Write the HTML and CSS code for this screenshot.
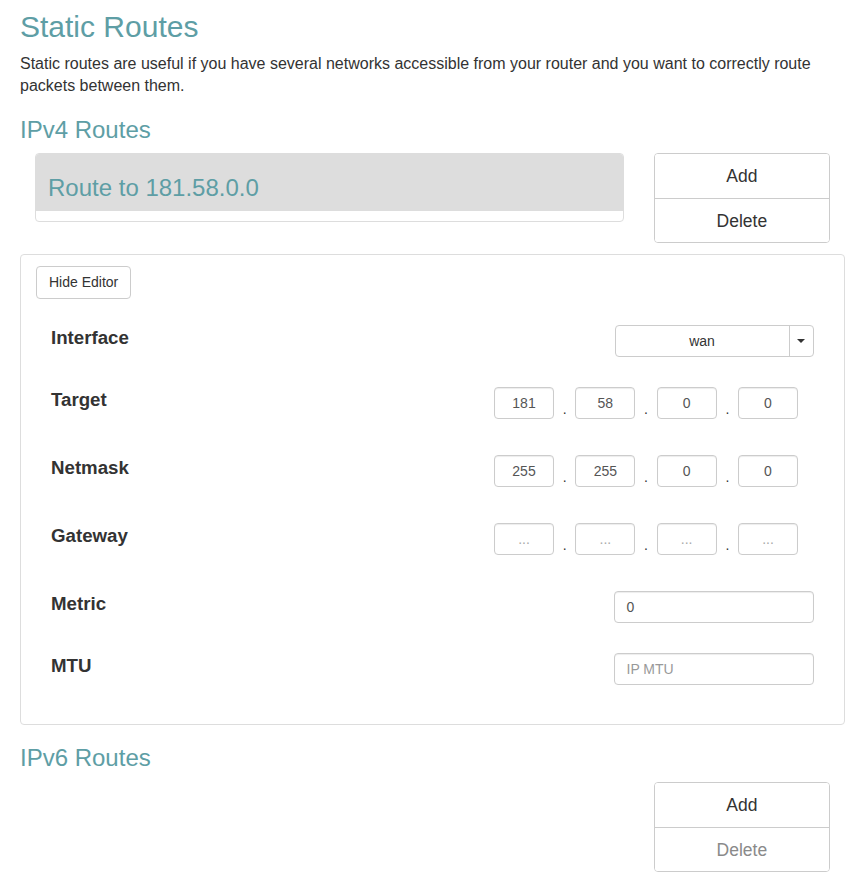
FILE: index.html
```html
<!DOCTYPE html>
<html lang="en">
<head>
<meta charset="utf-8">
<title>Static Routes</title>
<link rel="stylesheet" href="styles.css">
</head>
<body>
<div class="page">
  <h1 class="title">Static Routes</h1>
  <p class="intro">Static routes are useful if you have several networks accessible from your router and you want to correctly route packets between them.</p>

  <h3 class="section">IPv4 Routes</h3>
  <div class="row">
    <div class="col-main">
      <div class="route-list">
        <div class="route-item">Route to 181.58.0.0</div>
        <div class="route-foot"></div>
      </div>
    </div>
    <div class="col-side">
      <div class="btn-stack">
        <button class="stack-btn">Add</button>
        <button class="stack-btn">Delete</button>
      </div>
    </div>
  </div>

  <div class="editor">
    <button class="btn-small">Hide Editor</button>
    <div class="fields">
      <div class="field-row">
        <div class="label">Interface</div>
        <div class="select">
          <span class="select-value">wan</span>
          <span class="select-caret"><span class="caret"></span></span>
        </div>
      </div>
      <div class="field-row">
        <div class="label">Target</div>
        <div class="ip-group">
          <span class="ip-box">181</span><span class="ip-sep">.</span>
          <span class="ip-box">58</span><span class="ip-sep">.</span>
          <span class="ip-box">0</span><span class="ip-sep">.</span>
          <span class="ip-box">0</span>
        </div>
      </div>
      <div class="field-row">
        <div class="label">Netmask</div>
        <div class="ip-group">
          <span class="ip-box">255</span><span class="ip-sep">.</span>
          <span class="ip-box">255</span><span class="ip-sep">.</span>
          <span class="ip-box">0</span><span class="ip-sep">.</span>
          <span class="ip-box">0</span>
        </div>
      </div>
      <div class="field-row">
        <div class="label">Gateway</div>
        <div class="ip-group">
          <span class="ip-box placeholder">...</span><span class="ip-sep">.</span>
          <span class="ip-box placeholder">...</span><span class="ip-sep">.</span>
          <span class="ip-box placeholder">...</span><span class="ip-sep">.</span>
          <span class="ip-box placeholder">...</span>
        </div>
      </div>
      <div class="field-row">
        <div class="label">Metric</div>
        <div class="text-input">0</div>
      </div>
      <div class="field-row">
        <div class="label">MTU</div>
        <div class="text-input placeholder">IP MTU</div>
      </div>
    </div>
  </div>

  <h3 class="section">IPv6 Routes</h3>
  <div class="row">
    <div class="col-main"></div>
    <div class="col-side">
      <div class="btn-stack">
        <button class="stack-btn">Add</button>
        <button class="stack-btn disabled">Delete</button>
      </div>
    </div>
  </div>
</div>
</body>
</html>
```

FILE: styles.css
```css
* {
  box-sizing: border-box;
}

body {
  margin: 0;
  background: #fff;
  color: #333;
  font-family: "Liberation Sans", Arial, sans-serif;
}

.page {
  padding: 0 18px 0 20px;
}

.title {
  margin: 10px 0 0;
  font-size: 30px;
  line-height: 33px;
  font-weight: normal;
  color: #5e9ea5;
}

.intro {
  margin: 9.5px 0 0;
  font-size: 16px;
  line-height: 22px;
}

.section {
  margin: 20px 0 10.5px;
  font-size: 24px;
  line-height: 26.4px;
  font-weight: normal;
  color: #5e9ea5;
}

.row {
  display: flex;
}

.col-main {
  flex: 0 0 75%;
  padding: 0 15px;
}

.col-side {
  flex: 0 0 25%;
  padding: 0 15px;
}

.route-list {
  border: 1px solid #ddd;
  border-radius: 4px;
  overflow: hidden;
}

.route-item {
  background: #ddd;
  color: #5e9ea5;
  font-size: 24px;
  line-height: 26px;
  padding: 21px 12px 10px;
}

.route-foot {
  height: 10px;
}

.btn-stack {
  display: flex;
  flex-direction: column;
  border: 1px solid #ccc;
  border-radius: 4px;
  overflow: hidden;
}

.stack-btn {
  height: 44px;
  border: 0;
  background: #fff;
  color: #333;
  font-family: inherit;
  font-size: 17.5px;
  padding: 0;
}

.stack-btn + .stack-btn {
  height: 44px;
  border-top: 1px solid #ccc;
  padding-top: 1px;
}

.stack-btn.disabled {
  color: #8a8a8a;
}

.editor {
  margin-top: 11px;
  border: 1px solid #ddd;
  border-radius: 4px;
  padding: 11px 30.5px 39px 15px;
}

.btn-small {
  display: block;
  border: 1px solid #ccc;
  border-radius: 4px;
  background: #fff;
  color: #333;
  font-family: inherit;
  font-size: 14px;
  line-height: 19px;
  padding: 6px 12px;
}

.fields {
  margin-top: 26px;
  padding-left: 15px;
}

.field-row {
  display: flex;
  justify-content: space-between;
  align-items: flex-start;
}

.field-row + .field-row {
  margin-top: 30px;
}

.label {
  font-weight: bold;
  font-size: 18.7px;
  line-height: 22px;
  padding-top: 2px;
}

.select {
  display: flex;
  width: 199px;
  height: 32px;
  border: 1px solid #ccc;
  border-radius: 4px;
  background: #fff;
  font-size: 14px;
  color: #333;
}

.select-value {
  flex: 1;
  text-align: center;
  line-height: 30px;
}

.select-caret {
  width: 24px;
  border-left: 1px solid #ccc;
  display: flex;
  align-items: center;
  justify-content: center;
}

.caret {
  width: 0;
  height: 0;
  border-left: 4px solid transparent;
  border-right: 4px solid transparent;
  border-top: 4px solid #333;
}

.ip-group {
  display: flex;
  height: 38px;
  margin-right: 15.5px;
  padding-bottom: 6px;
}

.ip-box {
  display: block;
  width: 60px;
  height: 32px;
  border: 1px solid #ccc;
  border-radius: 4px;
  box-shadow: inset 0 1px 1px rgba(0, 0, 0, 0.075);
  text-align: center;
  font-size: 14px;
  line-height: 30px;
  color: #555;
}

.ip-sep {
  display: block;
  width: 21.33px;
  height: 32px;
  text-align: center;
  font-size: 14px;
  line-height: 19px;
  padding-top: 13px;
  color: #333;
}

.placeholder {
  color: #999;
}

.ip-box.placeholder {
  color: #aaa;
}

.text-input {
  width: 200px;
  height: 32px;
  border: 1px solid #ccc;
  border-radius: 4px;
  box-shadow: inset 0 1px 1px rgba(0, 0, 0, 0.075);
  padding: 0 12px;
  font-size: 14px;
  line-height: 30px;
  color: #555;
}

.text-input.placeholder {
  color: #999;
}
```
